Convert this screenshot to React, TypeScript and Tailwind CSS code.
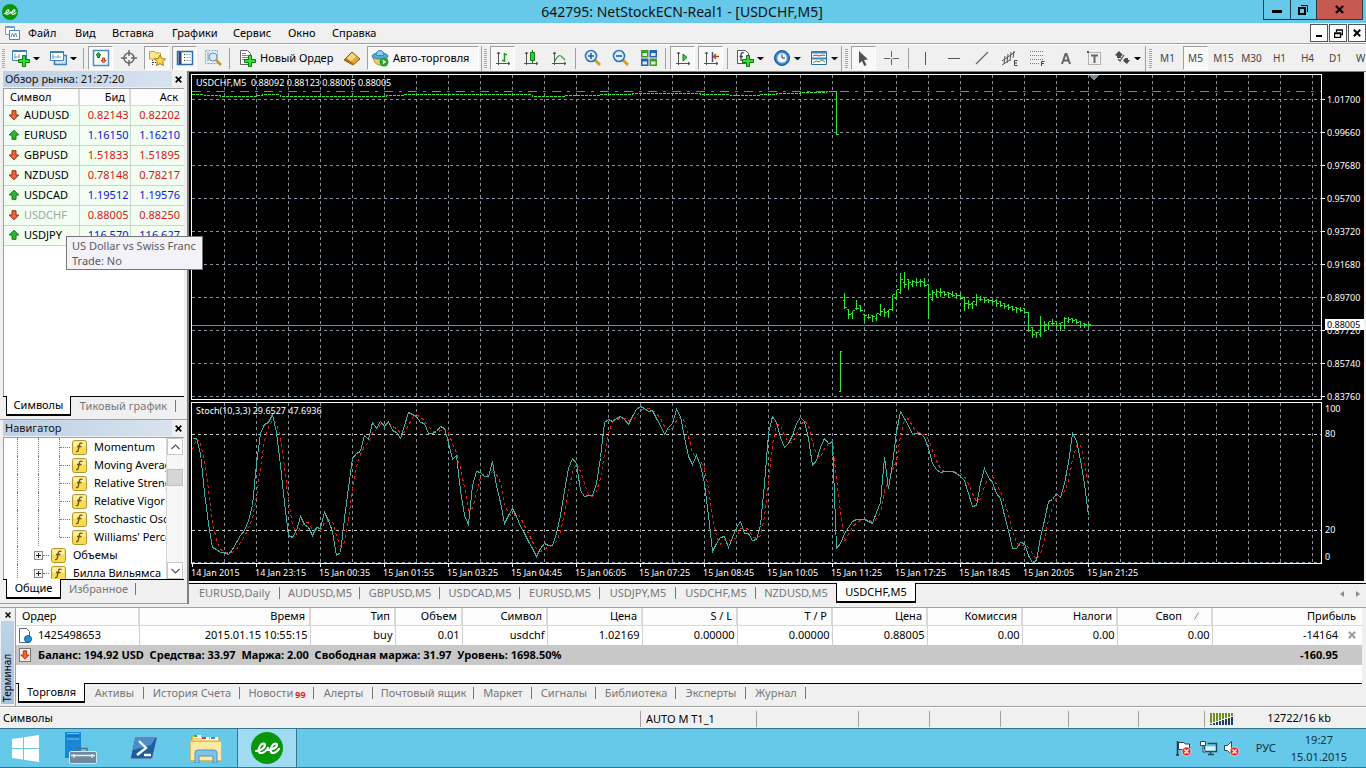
import type { ReactNode } from 'react'
import clsx from 'clsx'

type Quote = { symbol: string; bid: string; ask: string; up: boolean; muted?: boolean }

const quotes: Quote[] = [
  { symbol: 'AUDUSD', bid: '0.82143', ask: '0.82202', up: false },
  { symbol: 'EURUSD', bid: '1.16150', ask: '1.16210', up: true },
  { symbol: 'GBPUSD', bid: '1.51833', ask: '1.51895', up: false },
  { symbol: 'NZDUSD', bid: '0.78148', ask: '0.78217', up: false },
  { symbol: 'USDCAD', bid: '1.19512', ask: '1.19576', up: true },
  { symbol: 'USDCHF', bid: '0.88005', ask: '0.88250', up: false, muted: true },
  { symbol: 'USDJPY', bid: '116.570', ask: '116.627', up: true },
]

const indicators = ['Momentum', 'Moving Average of Oscillator', 'Relative Strength Index', 'Relative Vigor Index', 'Stochastic Oscillator', "Williams' Percent Range"]
const groups = ['Объемы', 'Билла Вильямса']

const priceLabels = ['1.01700', '0.99660', '0.97680', '0.95700', '0.93720', '0.91680', '0.89700', '0.87720', '0.85740', '0.83760']
const timeLabels = ['14 Jan 2015', '14 Jan 23:15', '15 Jan 00:35', '15 Jan 01:55', '15 Jan 03:25', '15 Jan 04:45', '15 Jan 06:05', '15 Jan 07:25', '15 Jan 08:45', '15 Jan 10:05', '15 Jan 11:25', '15 Jan 17:25', '15 Jan 18:45', '15 Jan 20:05', '15 Jan 21:25']

// %K line, one value per bar, in thirds of a pixel below the top of the indicator window
const stochMain = [
  115, 115, 160, 275, 370, 440, 448, 457, 456, 463, 447, 427, 405, 390, 360, 315, 190, 100, 73, 67, 42, 95, 195, 305, 405, 410, 390, 347,
  373, 380, 404, 380, 385, 335, 360, 392, 466, 455, 355, 260, 173, 160, 153, 105, 118, 66, 85, 62, 78, 62, 90, 97, 114, 75, 37, 42, 48, 65,
  68, 100, 100, 92, 77, 85, 125, 178, 165, 270, 345, 373, 255, 212, 216, 229, 229, 182, 255, 305, 370, 345, 325, 348, 378, 400, 422, 445,
  468, 445, 430, 436, 436, 400, 345, 270, 205, 175, 190, 270, 288, 286, 286, 250, 170, 65, 58, 62, 55, 49, 58, 72, 48, 28, 18, 25, 32, 30,
  55, 75, 102, 82, 68, 28, 48, 110, 168, 192, 165, 195, 250, 345, 453, 430, 410, 408, 440, 412, 380, 362, 400, 400, 420, 418, 375, 250,
  100, 47, 65, 110, 142, 130, 105, 68, 50, 62, 115, 195, 180, 140, 113, 130, 125, 443, 430, 398, 380, 362, 358, 357, 357, 363, 370, 335,
  305, 170, 265, 190, 95, 32, 55, 75, 103, 100, 98, 112, 145, 190, 208, 216, 212, 214, 212, 220, 228, 240, 280, 318, 315, 250, 205, 232,
  245, 280, 295, 345, 390, 445, 444, 426, 430, 466, 485, 480, 410, 360, 303, 298, 280, 290, 250, 185, 100, 120, 180, 250, 345,
]

// high / low of each bar after the gap, same units, below the top of the chart
const bars: [number, number][] = [
  [666, 712], [718, 742], [720, 742], [687, 715], [705, 720], [733, 750], [730, 742], [735, 750], [730, 746], [700, 733], [712, 735],
  [716, 738], [673, 716], [658, 684], [605, 665], [603, 648], [627, 655], [627, 645], [622, 642], [625, 645], [622, 645], [642, 740],
  [657, 686], [655, 676], [652, 676], [660, 672], [664, 678], [660, 675], [668, 682], [665, 683], [680, 716], [687, 711], [693, 711],
  [669, 702], [676, 686], [680, 692], [684, 694], [683, 697], [684, 704], [693, 706], [695, 712], [700, 714], [704, 718], [708, 724],
  [708, 720], [713, 727], [727, 780], [770, 797], [786, 797], [736, 795], [750, 781], [752, 774], [743, 760], [750, 768], [755, 776],
  [738, 770], [738, 752], [744, 752], [745, 756], [752, 768], [760, 768], [758, 768],
]

const clamp = (v: number, lo: number, hi: number) => Math.max(lo, Math.min(hi, v))
const toLine = (values: number[]) => values.map((v, i) => `${192.5 + i * 4},${Math.round(400 + v / 3) + 0.5}`).join(' ')
const stochSignal = stochMain.map((_, i) => {
  const part = stochMain.slice(Math.max(0, i - 2), i + 1)
  return part.reduce((a, b) => a + b, 0) / part.length + (i === 0 ? 32 : 0)
})

const barPath = bars
  .map(([hi, lo], i) => {
    const x = 844.5 + i * 4
    const [nextHi, nextLo] = bars[i + 1] ?? [hi, lo]
    const [prevHi, prevLo] = bars[i - 1] ?? [hi, lo]
    const px = (v: number) => Math.round(70 + v / 3) + 0.5
    const close = px(clamp((nextHi + nextLo) / 2, hi, lo))
    const open = px(clamp((prevHi + prevLo) / 2, hi, lo))
    return `M${x} ${px(hi)}V${px(lo) + 1}M${x - 1.5} ${open}H${x}M${x} ${close}H${x + 2}`
  })
  .join('')

const gridX = Array.from({ length: 35 }, (_, i) => 224.5 + i * 32)
const gridY = Array.from({ length: 10 }, (_, i) => 99.5 + i * 33)

/* ---------- icons ---------- */

function EeLogo({ className }: { className: string }) {
  return (
    <svg viewBox="0 0 32 32" className={className} aria-hidden="true">
      <circle cx="16" cy="16" r="16" fill="#0a960a" />
      <path d="M5 19c4 0 9-3 9-6 0-2-3-2-5 1s-2 7 1 7c2 0 5-2 7-5M16 18c4 0 10-2 10-5 0-2-3-2-5 1s-2 7 1 7c2 0 4-1 6-4" fill="none" stroke="#fff" strokeWidth="2.2" strokeLinecap="round" />
    </svg>
  )
}

function Icon({ children }: { children: ReactNode }) {
  return (
    <svg viewBox="0 0 18 18" className="size-[18px] shrink-0" fill="none" aria-hidden="true">
      {children}
    </svg>
  )
}

const plus = <path d="M10.500 6.500h3v4h4v3h-4v4h-3v-4h-4v-3h4z" fill="#35dc35" stroke="#0b7d0b" />
const axes = <path d="M4.500 3v13M2 14.500h14M3 5l1.500-2L6 5M14 13l2 1.500-2 1.500" stroke="#555" />

const icons = {
  newChart: <Icon><path d="M.500 1.500h14v10h-14z" fill="#fff" stroke="#3f7fb5" /><path d="M.500 2h14" stroke="#3f7fb5" strokeWidth="2" /><path d="M3 4v6M2 8h6M7 5v4" stroke="#7aa7c9" />{plus}</Icon>,
  profiles: <Icon><path d="M5.500 6.500h12v9h-12z" fill="#cfe3f5" stroke="#3f7fb5" strokeWidth="1.500" /><path d="M1.500 2.500h13v9h-13z" fill="#fff" stroke="#3f7fb5" /><path d="M1.500 3h13" stroke="#3f7fb5" strokeWidth="2" /><path d="M4 5v5M3 8h9M9 6v3" stroke="#7aa7c9" /></Icon>,
  market: <Icon><path d="M1.500 1.500h15v15h-15z" fill="#fff" stroke="#4a8cc4" strokeWidth="1.500" /><path d="M6.500 3.500 9 6H7.500v2.500h-2V6H4z" fill="#2fc02f" stroke="#157a15" /><path d="M11.500 14 9 11.500h1.500V9h2v2.500H14z" fill="#ff7a4c" stroke="#c03a14" /></Icon>,
  dataWindow: <Icon><circle cx="9" cy="9" r="5" stroke="#666" strokeWidth="1.500" /><path d="M9 1v6M9 11v6M1 9h6M11 9h6" stroke="#666" strokeWidth="1.500" /></Icon>,
  navigator: <Icon><path d="M1.500 2.500h5l1 1.500h5v6h-11z" fill="#ffe98a" stroke="#c9a227" /><path d="M4.500 11v6M5 13.500h3" stroke="#333" strokeDasharray="1 1" /><path d="m12 6 1.700 3.500 3.800.500-2.800 2.700.700 3.800-3.400-1.800-3.400 1.800.700-3.800L6.500 10l3.800-.500z" fill="#ffd84a" stroke="#a87c12" /></Icon>,
  terminal: <Icon><path d="M1.500 2.500h15v13h-15z" fill="#fff" stroke="#2f6ea8" strokeWidth="1.500" /><path d="M4 3v12" stroke="#2d3f78" strokeWidth="3" /><path d="M8 5.500h1M8 8.500h1M8 11.500h1" stroke="#333" /><path d="M10 5.500h5M10 8.500h5M10 11.500h5" stroke="#a8c8e4" /></Icon>,
  tester: <Icon><path d="M1.500 1.500h12v13h-12z" fill="#e4eef7" stroke="#8aaac4" strokeDasharray="2 1" /><path d="M4 3v9M7 5v7" stroke="#7a9ab8" /><circle cx="9" cy="8" r="4" fill="#d5ecfb" fillOpacity=".85" stroke="#6c8fae" /><path d="m12 11 5 5" stroke="#c9982a" strokeWidth="2.500" /></Icon>,
  newOrder: <Icon><path d="M2.500 1.500h7l3 3v11h-10z" fill="#fff" stroke="#666" /><path d="M4 4.500h4M4 6.500h6M4 8.500h6M4 10.500h3" stroke="#888" />{plus}</Icon>,
  editor: <Icon><path d="m1 11 8-8 8 7-7 6z" fill="#e2a63a" stroke="#8e5f10" /><path d="m1 11 9 5v-2L3 9.500z" fill="#a76c12" /><path d="m4 9 5-5 4 3.500-5 5z" fill="#f8d77c" /></Icon>,
  auto: <Icon><path d="M2 8c1 5 3 8 7 8s6-3 7-8z" fill="#f0cf58" stroke="#b58f23" /><ellipse cx="9" cy="7" rx="8" ry="3" fill="#5aa9d6" stroke="#2f7eac" /><path d="M5 6c0-6 8-6 8 0-2 1-6 1-8 0z" fill="#8ccbed" stroke="#2f7eac" /><circle cx="13" cy="13" r="4.500" fill="#1fa52c" /><path d="m11.800 10.500 3.500 2.500-3.500 2.500z" fill="#fff" /></Icon>,
  bars: <Icon>{axes}<path d="M10.500 4v9M8 11.500h2.500M10.500 5.500H13" stroke="#18a018" strokeWidth="1.500" /></Icon>,
  candles: <Icon>{axes}<path d="M10.500 1v13" stroke="#157a15" /><path d="M8.500 3.500h4v8h-4z" fill="#2fd02f" stroke="#157a15" /></Icon>,
  line: <Icon>{axes}<path d="M5 12c2-5 5-7 7-4l3 3" stroke="#3aa53a" strokeWidth="1.300" /></Icon>,
  zoomIn: <Icon><path d="m11 11 5 5" stroke="#d1a02c" strokeWidth="3" /><circle cx="7" cy="7" r="5.500" fill="#d9effb" stroke="#2f74b5" strokeWidth="1.600" /><path d="M4 7h6M7 4v6" stroke="#2b5fa0" strokeWidth="1.600" /></Icon>,
  zoomOut: <Icon><path d="m11 11 5 5" stroke="#d1a02c" strokeWidth="3" /><circle cx="7" cy="7" r="5.500" fill="#d9effb" stroke="#2f74b5" strokeWidth="1.600" /><path d="M4 7h6" stroke="#2b5fa0" strokeWidth="1.600" /></Icon>,
  tiles: <Icon><path d="M1 1h7.500v7.500H1zM9.500 9.500H17V17H9.500z" fill="#3f9e2a" /><path d="M9.500 1H17v7.500H9.500zM1 9.500h7.500V17H1z" fill="#2a5fc0" /><path d="M2.500 4H7v3H2.500zM11 4h4.500v3H11zM2.500 12.500H7v3H2.500zM11 12.500h4.500v3H11z" fill="#dcebdc" /></Icon>,
  autoScroll: <Icon>{axes}<path d="m9 5 4 3.500L9 12z" fill="#3fce4f" stroke="#157a15" /></Icon>,
  shift: <Icon>{axes}<path d="M10.500 3v10" stroke="#33558a" strokeWidth="1.500" /><path d="M17 7.500h-5M14 5l-2.500 2.500L14 10" stroke="#b8400a" strokeWidth="1.300" /></Icon>,
  indicatorList: <Icon><path d="M1.500 1.500h8l3 3v10h-11z" fill="#fff" stroke="#555" /><path d="M8 4c-2-1-3 0-3 2v6M3.500 7.500H7" stroke="#444" strokeWidth="1.300" />{plus}</Icon>,
  periods: <Icon><circle cx="9" cy="9" r="7.500" fill="#2f7fd0" stroke="#1e5490" /><circle cx="9" cy="9" r="5" fill="#f2f8fd" stroke="#8fb8dd" /><path d="M9 5.500V9h3" stroke="#333" /></Icon>,
  templates: <Icon><path d="M1.500 2.500h15v13h-15z" fill="#fff" stroke="#2f6ea8" /><path d="M1.500 3.500h15M2 9.500h14" stroke="#3f86c0" strokeWidth="2" /><path d="m3 7 3-1 3 1 3-1 3 .500" stroke="#b03a2a" /><path d="m3 14 3-2 3 1 3-2 3 2" stroke="#2f9a2f" /></Icon>,
  cursor: <Icon><path d="m4 2 9 8.500-4 .500 2.500 5-2.200 1L7 12l-3 2.500z" fill="#505050" /></Icon>,
  cross: <Icon><path d="M8.500 2v6M8.500 10v6M1 9.500h6.500M9.500 9.500H16" stroke="#666" /></Icon>,
  vline: <Icon><path d="M8.500 3v13" stroke="#555" /></Icon>,
  hline: <Icon><path d="M3 9.500h12" stroke="#555" /></Icon>,
  trend: <Icon><path d="M3 15 15 3" stroke="#666" strokeWidth="1.300" /></Icon>,
  channel: <Icon><path d="m1 12 13-9M1 16l8-5M4 7l-1 8M7 5 6 14M10 3 9 12M13 2l-1 7" stroke="#555" /><path d="M16.500 11.500h-3v5h3M13.500 14h2.500" stroke="#444" /></Icon>,
  fibo: <Icon><path d="M1 2.500h14M1 6.500h14M1 10.500h14M1 14.500h9" stroke="#777" strokeDasharray="1 1" /><path d="M15.500 12.500h-3V17M12.500 14.500H15" stroke="#444" /></Icon>,
  text: <Icon><path d="m5 15 3.500-10h1L13 15M6.500 11.500h5" stroke="#666" strokeWidth="2" /></Icon>,
  label: <Icon><path d="M3.500 3.500h12v12h-12z" stroke="#777" strokeDasharray="1 1" /><path d="M6 6.500h7M9.500 6v8" stroke="#666" strokeWidth="2" /><path d="M2 2h2v2H2z" fill="#555" /></Icon>,
  arrows: <Icon><path d="m6 2 4 4-4 2-4-2zM4 7h4v2H4zM12 9h3v2h2l-3 4-4-3z" fill="#4c4c4c" /><path d="m5 10 2 2 4-6" stroke="#555" strokeWidth="1.300" /></Icon>,
}

function TradeArrow({ up }: { up: boolean }) {
  return (
    <svg viewBox="0 0 12 12" className="size-3 shrink-0" aria-hidden="true">
      <path
        d="M6 1.200 10.800 6H8v4.300H4V6H1.200z"
        transform={up ? undefined : 'rotate(180 6 6)'}
        fill={up ? '#2fb92f' : '#f0643c'}
        stroke={up ? '#12701a' : '#a02c0c'}
      />
    </svg>
  )
}

function FunctionIcon() {
  return (
    <svg viewBox="0 0 15 15" className="size-[15px] shrink-0" aria-hidden="true">
      <rect x=".5" y=".5" width="14" height="14" rx="2" fill="#f7dc55" stroke="#b8952a" />
      <path d="M1.500 1.500h12v5h-12z" fill="#fdf0a0" />
      <path d="M10.500 3.500c-2-1-3 0-3.300 2l-.9 4.500c-.3 1.600-1 2-2.300 1.500M5 6.500h4.500" fill="none" stroke="#6b5410" strokeWidth="1.300" />
    </svg>
  )
}

/* ---------- toolbar ---------- */

function ToolButton({ label, pressed, menu, children }: { label: string; pressed?: boolean; menu?: boolean; children: ReactNode }) {
  return (
    <button type="button" aria-label={label} className="flex h-6 shrink-0 items-center">
      <span
        className={clsx(
          'flex h-6 w-[25px] items-center justify-center',
          pressed && 'border border-t-[#a0a0a0] border-r-white border-b-white border-l-[#a0a0a0] bg-[#f8f8f8]',
        )}
      >
        {children}
      </span>
      {menu && <span className="mr-0.5 h-0 w-[7px] border-x-[3px] border-t-[3px] border-x-transparent border-t-black" />}
    </button>
  )
}

function Divider() {
  return <span className="mx-px h-[21px] w-px shrink-0 bg-[#a0a0a0]" />
}

function Segment({ children, className }: { children: ReactNode; className?: string }) {
  return (
    <div className={clsx('flex h-[25px] items-center gap-[3px]', className)}>
      <span className="h-[19px] w-[3px] shrink-0 bg-[repeating-linear-gradient(#a8a8a8_0_1px,#f0f0f0_1px_2px)]" />
      {children}
    </div>
  )
}

function Toolbar() {
  return (
    <div className="flex h-[27px] items-center overflow-hidden border-t border-white">
      <Segment className="shrink-0 pl-0.5">
        <ToolButton label="Новый график" menu>{icons.newChart}</ToolButton>
        <ToolButton label="Профили" menu>{icons.profiles}</ToolButton>
        <Divider />
        <ToolButton label="Обзор рынка" pressed>{icons.market}</ToolButton>
        <ToolButton label="Окно данных">{icons.dataWindow}</ToolButton>
        <ToolButton label="Навигатор" pressed>{icons.navigator}</ToolButton>
        <ToolButton label="Терминал" pressed>{icons.terminal}</ToolButton>
        <ToolButton label="Тестер стратегий">{icons.tester}</ToolButton>
        <Divider />
        <button type="button" className="flex h-6 w-[102px] items-center gap-1 pl-1 text-[11px] whitespace-nowrap">
          {icons.newOrder}
          Новый Ордер
        </button>
        <ToolButton label="MetaEditor">{icons.editor}</ToolButton>
        <button type="button" className="flex h-6 w-[112px] items-center gap-1 border border-t-[#a0a0a0] border-r-white border-b-white border-l-[#a0a0a0] bg-[#f8f8f8] pl-[3px] text-[11px] whitespace-nowrap">
          {icons.auto}
          Авто-торговля
        </button>
      </Segment>
      <Segment className="ml-0.5 shrink-0 border-l border-[#a0a0a0] pl-0.5">
        <ToolButton label="Бары" pressed>{icons.bars}</ToolButton>
        <ToolButton label="Свечи">{icons.candles}</ToolButton>
        <ToolButton label="Линия">{icons.line}</ToolButton>
        <Divider />
        <ToolButton label="Увеличить">{icons.zoomIn}</ToolButton>
        <ToolButton label="Уменьшить">{icons.zoomOut}</ToolButton>
        <ToolButton label="Окна мозаикой">{icons.tiles}</ToolButton>
        <Divider />
        <ToolButton label="Автопрокрутка" pressed>{icons.autoScroll}</ToolButton>
        <ToolButton label="Сдвиг графика" pressed>{icons.shift}</ToolButton>
        <Divider />
        <ToolButton label="Индикаторы" menu>{icons.indicatorList}</ToolButton>
        <ToolButton label="Периоды" menu>{icons.periods}</ToolButton>
        <ToolButton label="Шаблоны" menu>{icons.templates}</ToolButton>
      </Segment>
      <Segment className="ml-px shrink-0 border-l border-[#a0a0a0] pl-[3px]">
        <ToolButton label="Курсор" pressed>{icons.cursor}</ToolButton>
        <ToolButton label="Перекрестие">{icons.cross}</ToolButton>
        <Divider />
        <ToolButton label="Вертикальная линия">{icons.vline}</ToolButton>
        <ToolButton label="Горизонтальная линия">{icons.hline}</ToolButton>
        <ToolButton label="Трендовая линия">{icons.trend}</ToolButton>
        <ToolButton label="Равноудаленный канал">{icons.channel}</ToolButton>
        <ToolButton label="Линии Фибоначчи">{icons.fibo}</ToolButton>
        <ToolButton label="Текст">{icons.text}</ToolButton>
        <ToolButton label="Метка">{icons.label}</ToolButton>
        <ToolButton label="Стрелки" menu>{icons.arrows}</ToolButton>
      </Segment>
      <Segment className="ml-0.5 min-w-0 flex-1 border-l border-[#a0a0a0] pl-[3px]">
        {['M1', 'M5', 'M15', 'M30', 'H1', 'H4', 'D1', 'W1'].map((p) => (
          <ToolButton key={p} label={p} pressed={p === 'M5'}>
            <span className="text-[10px] text-[#444]">{p}</span>
          </ToolButton>
        ))}
      </Segment>
    </div>
  )
}

/* ---------- side panels ---------- */

function PanelTitle({ children }: { children: ReactNode }) {
  return (
    <div className="flex h-4 items-center">
      <h2 className="flex-1 bg-linear-to-r from-[#bcd0e6] to-[#d8e3ee] pl-0.5 text-[11px] leading-4 text-[#111]">{children}</h2>
      <button type="button" aria-label="Закрыть" className="flex h-4 w-3 items-center justify-center">
        <CloseMark className="size-[7px] text-black" />
      </button>
    </div>
  )
}

function CloseMark({ className }: { className: string }) {
  return (
    <svg viewBox="0 0 7 7" className={className} aria-hidden="true">
      <path d="m.7.700 5.600 5.600M6.300.700.700 6.300" stroke="currentColor" strokeWidth="1.700" />
    </svg>
  )
}

function Tab({ active, className, children }: { active?: boolean; className: string; children: ReactNode }) {
  return (
    <button
      type="button"
      role="tab"
      aria-selected={!!active}
      className={clsx(
        'flex shrink-0 items-center justify-center whitespace-nowrap text-[11px]',
        active ? '-mt-px h-5 border-x border-b-2 border-black bg-white text-black' : 'h-[18px] text-[#777]',
        className,
      )}
    >
      {children}
    </button>
  )
}

function TabDivider() {
  return <span className="-ml-px mt-[3px] h-3 w-px shrink-0 bg-[#777]" />
}

function MarketWatch() {
  return (
    <section className="relative flex flex-1 flex-col border-b border-[#a0a0a0] pr-[3px] pl-[3px]">
      <PanelTitle>Обзор рынка: 21:27:20</PanelTitle>
      <div className="mt-px flex flex-1 flex-col border-t border-l border-[#a0a0a0] bg-white">
        <table className="w-full table-fixed border-collapse text-[11px] leading-4">
          <thead>
            <tr className="h-4 bg-[#fcfcfc] leading-[15px]">
              <th className="w-[75px] border-r-2 border-b border-[#d8d8d8] py-0 pl-1.5 text-left font-normal">Символ</th>
              <th className="w-[51px] border-r-2 border-b border-[#d8d8d8] py-0 pr-1 text-right font-normal">Бид</th>
              <th className="border-b border-[#d8d8d8] py-0 pr-1.5 text-right font-normal">Аск</th>
            </tr>
          </thead>
          <tbody>
            {quotes.map((q) => (
              <tr key={q.symbol} className="h-5 bg-[#f1fef1]">
                <td className={clsx('border-r border-b border-[#cdd3cd] py-0 pl-1', q.muted && 'text-[#a0a5a0]')}>
                  <span className="flex items-center gap-1">
                    <TradeArrow up={q.up} />
                    {q.symbol}
                  </span>
                </td>
                <td className={clsx('border-r border-b border-[#cdd3cd] py-0 pr-px text-right', q.up ? 'text-[#1414d8]' : 'text-[#d81414]')}>{q.bid}</td>
                <td className={clsx('border-b border-[#cdd3cd] py-0 pr-1 text-right', q.up ? 'text-[#1414d8]' : 'text-[#d81414]')}>{q.ask}</td>
              </tr>
            ))}
          </tbody>
        </table>
      </div>
      <div role="tablist" className="flex h-[23px] border-t border-black pl-[3px]">
        <Tab active className="w-[65px]">Символы</Tab>
        <Tab className="w-[105px]">Тиковый график</Tab>
        <TabDivider />
      </div>
      <div role="tooltip" className="absolute top-[165px] left-[66px] z-10 border border-[#767676] bg-[#f2f2f8] py-px pr-1.5 pl-[5px] text-[11px] leading-[15px] whitespace-nowrap text-[#5c5c5c]">
        US Dollar vs Swiss Franc
        <br />
        Trade: No
      </div>
    </section>
  )
}

function Navigator() {
  return (
    <section className="flex flex-col px-[3px]">
      <PanelTitle>Навигатор</PanelTitle>
      <div className="mt-px flex h-[142px] border-t border-l border-[#a0a0a0] bg-white">
        <ul className="min-w-0 flex-1 overflow-hidden text-[11px]">
          {indicators.map((name) => (
            <li key={name} className="flex h-[18px] items-center whitespace-nowrap">
              <span className="h-full w-[13px] shrink-0" />
              <span className="h-full w-[21px] shrink-0 border-l border-dotted border-[#777]" />
              <span className="h-full w-[21px] shrink-0 border-l border-dotted border-[#777]" />
              <span className={clsx('w-px shrink-0 border-l border-dotted border-[#777]', name.startsWith('Will') ? 'h-[9px] self-start' : 'h-full')} />
              <span className="mr-0.5 w-2.5 shrink-0 border-t border-dotted border-[#777]" />
              <FunctionIcon />
              <span className="ml-[7px]">{name}</span>
            </li>
          ))}
          {groups.map((name) => (
            <li key={name} className="flex h-[18px] items-center whitespace-nowrap">
              <span className="h-full w-[13px] shrink-0" />
              <span className="h-full w-[17px] shrink-0 border-l border-dotted border-[#777]" />
              <button type="button" aria-label={`Развернуть: ${name}`} className="flex size-[9px] shrink-0 items-center justify-center border border-[#8a8a8a] bg-[#f4f4f4]">
                <svg viewBox="0 0 5 5" className="size-[5px]" aria-hidden="true"><path d="M0 2.500h5M2.500 0v5" stroke="#222" /></svg>
              </button>
              <span className="mr-0.5 w-1.5 shrink-0 border-t border-dotted border-[#777]" />
              <FunctionIcon />
              <span className="ml-[7px]">{name}</span>
            </li>
          ))}
        </ul>
        <div className="mr-px flex w-[17px] flex-col border-l border-[#d8d8d8] bg-[#f6f6f6]">
          <ScrollArrow up />
          <div className="mt-3.5 h-[17px] border border-[#c0c0c0] bg-[#d6d6d6]" />
          <div className="flex-1" />
          <ScrollArrow />
        </div>
      </div>
      <div role="tablist" className="flex h-[22px] border-t border-black pl-[3px]">
        <Tab active className="w-[55px]">Общие</Tab>
        <Tab className="w-[75px]">Избранное</Tab>
        <TabDivider />
      </div>
    </section>
  )
}

function ScrollArrow({ up }: { up?: boolean }) {
  return (
    <button type="button" aria-label={up ? 'Вверх' : 'Вниз'} className="flex h-[17px] items-center justify-center border border-[#c8c8c8] bg-white">
      <svg viewBox="0 0 9 6" className="h-1.5 w-[9px]" fill="none" aria-hidden="true">
        <path d={up ? 'm.5 5 4-4 4 4' : 'm.5 1 4 4 4-4'} stroke="#555" strokeWidth="1.200" />
      </svg>
    </button>
  )
}

/* ---------- chart ---------- */

function Plot() {
  return (
    <svg viewBox="191 74 1131 490" preserveAspectRatio="none" className="block min-w-0 flex-1" shapeRendering="crispEdges" fill="none" role="img" aria-label="USDCHF, M5">
      <g stroke="#84919f" strokeDasharray="3 3">
        {gridX.map((x) => (
          <path key={x} d={`M${x} 75V399M${x} 403V563`} />
        ))}
        {gridY.map((y) => (
          <path key={y} d={`M192 ${y}H1321`} />
        ))}
        <path d="M192 562.500H1321" />
      </g>
      <path d="M192 434.500H1321M192 530.500H1321" stroke="#c8c8c8" strokeDasharray="3 3" />
      <path d="M192 325.500H1321" stroke="#778899" />
      <path d="M192 91.500H1321" stroke="#3cb43c" strokeDasharray="9 6 3 6" />
      <path
        d="M192 94.500H204V95.500H220V96.500H256V95.500H262V94.500H280V96.500H386V95.500H404V94.500H450V94.500H500V94.500H532V96.500H564V95.500H600V94.500H632V93.500H700V94.500H730V95.500H760V94.500H776V93.500H800V92.500H826V91.500H836"
        stroke="#32e632"
        strokeDasharray="3 1"
      />
      <path d="M836.500 91V135M837 134.500H839M840.500 351V392M839 391.500H840M841 351.500H842" stroke="#32e632" />
      <path d={barPath} stroke="#32e632" />
      <polyline points={toLine(stochSignal)} stroke="#e02020" strokeDasharray="3 3" />
      <polyline points={toLine(stochMain)} stroke="#3fb0a8" />
      <path d="M1088 75h11l-5.500 5.500z" fill="#778899" />
      <path d="M191.500 74.500h1130v325h-1130zM191.500 402.500h1130v161h-1130z" stroke="#fff" />
    </svg>
  )
}

function Chart() {
  return (
    <div className="flex flex-1 flex-col bg-black pt-0.5 pl-0.5 text-[9px] leading-3 text-white">
      <div className="relative flex flex-1">
        <Plot />
        <div className="relative flex w-[42px] flex-col">
          <div className="flex h-[329px] flex-col pt-[9px]">
            {priceLabels.map((p) => (
              <span key={p} className="flex h-[33px] shrink-0 items-center gap-0.5">
                <span className="h-px w-[3px] bg-white" />
                {p}
              </span>
            ))}
          </div>
          <div className="flex flex-1 flex-col pl-[3px]">
            <span className="h-[25px]">100</span>
            <span className="h-24">80</span>
            <span className="h-[27px]">20</span>
            <span>0</span>
          </div>
          <span className="absolute top-[245px] right-0 left-[3px] h-[11px] bg-white pl-0.5 leading-[11px] text-black">0.88005</span>
        </div>
        <span className="absolute top-[3px] left-[5px] whitespace-pre">USDCHF,M5{'  '}0.88092 0.88123 0.88005 0.88005</span>
        <span className="absolute top-[331px] left-[5px]">Stoch(10,3,3) 29.6527 47.6936</span>
      </div>
      <div className="flex h-[17px] overflow-hidden">
        {timeLabels.map((t) => (
          <span key={t} className="flex w-16 shrink-0 flex-col whitespace-nowrap">
            <span className="ml-px h-[3px] w-px bg-white" />
            {t}
          </span>
        ))}
      </div>
    </div>
  )
}

const chartTabs = ['AUDUSD,M5', 'GBPUSD,M5', 'USDCAD,M5', 'EURUSD,M5', 'USDJPY,M5', 'USDCHF,M5', 'NZDUSD,M5']

function ChartTabs() {
  return (
    <div className="border-t border-white bg-[#f0f0f0] pt-px">
      <div role="tablist" className="flex h-[21px] border-t border-black">
        <Tab className="w-[91px]">EURUSD,Daily</Tab>
        <TabDivider />
        {chartTabs.map((t, i) => (
          <div key={t} className="flex">
            <Tab className={t === 'USDJPY,M5' ? 'w-[76px]' : 'w-20'}>{t}</Tab>
            {i < chartTabs.length - 1 && <TabDivider />}
          </div>
        ))}
        <Tab active className="w-20">USDCHF,M5</Tab>
        <div className="ml-auto flex items-center gap-3 pr-1.5">
          <button type="button" aria-label="Назад" className="border-y-[3px] border-r-[4px] border-y-transparent border-r-[#8a8a8a]" />
          <button type="button" aria-label="Вперед" className="border-y-[3px] border-l-[4px] border-y-transparent border-l-[#8a8a8a]" />
        </div>
      </div>
    </div>
  )
}

/* ---------- terminal ---------- */

const columns = [
  { title: 'Ордер', width: 'w-[123px]', value: '' },
  { title: 'Время', width: 'w-[171px]', value: '2015.01.15 10:55:15' },
  { title: 'Тип', width: 'w-[85px]', value: 'buy' },
  { title: 'Объем', width: 'w-[67px]', value: '0.01' },
  { title: 'Символ', width: 'w-[85px]', value: 'usdchf' },
  { title: 'Цена', width: 'w-[95px]', value: '1.02169' },
  { title: 'S / L', width: 'w-[95px]', value: '0.00000' },
  { title: 'T / P', width: 'w-[95px]', value: '0.00000' },
  { title: 'Цена', width: 'w-[95px]', value: '0.88005' },
  { title: 'Комиссия', width: 'w-[95px]', value: '0.00' },
  { title: 'Налоги', width: 'w-[95px]', value: '0.00' },
  { title: 'Своп', width: 'w-[95px]', value: '0.00' },
]

const terminalTabs = [
  ['Активы', 'w-[59px]'],
  ['История Счета', 'w-[96px]'],
  ['Новости', 'w-[74px]'],
  ['Алерты', 'w-[59px]'],
  ['Почтовый ящик', 'w-[101px]'],
  ['Маркет', 'w-[58px]'],
  ['Сигналы', 'w-[64px]'],
  ['Библиотека', 'w-[80px]'],
  ['Эксперты', 'w-[70px]'],
  ['Журнал', 'w-[60px]'],
]

function Terminal() {
  return (
    <section className="mt-[3px] flex border-y border-[#a0a0a0] pr-1">
      <div className="flex w-[15px] flex-col items-center pt-0.5">
        <button type="button" aria-label="Закрыть" className="flex h-2.5 items-center">
          <CloseMark className="size-1.5 text-black" />
        </button>
        <h2 className="mt-px mb-0.5 flex w-[13px] flex-1 rotate-180 items-center justify-start bg-linear-to-b from-[#a9c1dd] to-[#bfd3e8] pt-0.5 text-[10px] leading-[13px] [writing-mode:vertical-rl]">Терминал</h2>
      </div>
      <div className="min-w-0 flex-1 border-l border-[#a0a0a0]">
        <div className="h-[75px] bg-white">
          <table className="w-full table-fixed border-collapse text-[11px] leading-4">
            <thead>
              <tr className="h-[17px] bg-[#fcfcfc]">
                {columns.map((c, i) => (
                  <th key={i} className={clsx('border-r-2 border-b border-[#d8d8d8] py-0 pr-1 font-normal', c.width, i === 0 ? 'pl-1.5 text-left' : 'text-right')}>
                    {c.title === 'Своп' ? (
                      <span className="flex items-center justify-end gap-3 pr-2">
                        Своп
                        <svg viewBox="0 0 5 8" className="h-2 w-[5px]" aria-hidden="true"><path d="M.500 7.500 4.500.500" stroke="#888" /></svg>
                      </span>
                    ) : (
                      c.title
                    )}
                  </th>
                ))}
                <th className="border-b border-[#d8d8d8] py-0 pr-1.5 text-right font-normal">Прибыль</th>
              </tr>
            </thead>
            <tbody>
              <tr className="h-5">
                {columns.map((c, i) => (
                  <td key={i} className="border-r border-[#d0d0d0] py-0 pr-0.5 text-right">
                    {i === 0 ? (
                      <span className="flex items-center gap-1.5 pl-0.5">
                        <svg viewBox="0 0 14 15" className="h-[15px] w-3.5" aria-hidden="true">
                          <path d="M1.500.500h7l3 3v11h-10z" fill="#fff" stroke="#666" />
                          <circle cx="10" cy="11" r="3.500" fill="#2490dc" stroke="#125c98" />
                        </svg>
                        1425498653
                      </span>
                    ) : (
                      c.value
                    )}
                  </td>
                ))}
                <td className="py-0 pr-1.5">
                  <span className="flex items-center justify-end gap-2.5">
                    -14164
                    <button type="button" aria-label="Закрыть ордер">
                      <CloseMark className="size-2 text-[#999]" />
                    </button>
                  </span>
                </td>
              </tr>
              <tr className="h-5 bg-[#c8c8c8] font-bold">
                <td colSpan={12} className="py-0 pl-[3px]">
                  <span className="flex items-center gap-[7px] whitespace-pre">
                    <span className="flex h-3.5 w-3 items-center justify-center border border-[#777] bg-[#fbe9e2]">
                      <svg viewBox="0 0 12 12" className="size-2.5" aria-hidden="true">
                        <path d="M6 11 1 6h3V1h4v5h3z" fill="#f0643c" stroke="#a02c0c" />
                      </svg>
                    </span>
                    Баланс: 194.92 USD{'  '}Средства: 33.97{'  '}Маржа: 2.00{'  '}Свободная маржа: 31.97{'  '}Уровень: 1698.50%
                  </span>
                </td>
                <td className="py-0 pr-6 text-right">-160.95</td>
              </tr>
            </tbody>
          </table>
        </div>
        <div role="tablist" className="flex h-[23px] border-t border-black pl-0.5">
          <Tab active className="w-[67px]">Торговля</Tab>
          {terminalTabs.map(([title, width]) => (
            <div key={title} className="flex">
              <Tab className={width}>
                {title}
                {title === 'Новости' && <span className="mt-1 ml-0.5 text-[9px] leading-3 font-bold text-[#e0202c]">99</span>}
              </Tab>
              <TabDivider />
            </div>
          ))}
        </div>
      </div>
    </section>
  )
}

function StatusBar() {
  return (
    <footer className="flex h-[21px] items-center border-t border-white pt-px text-[11px]">
      <span className="flex-1 pl-[3px]">Символы</span>
      <span className="h-4 w-[116px] border-l border-[#a0a0a0] pl-[5px] leading-4">AUTO M T1_1</span>
      <span className="h-4 w-[102px] border-l border-[#a0a0a0]" />
      <span className="h-4 w-[71px] border-l border-[#a0a0a0]" />
      <span className="h-4 w-[71px] border-l border-[#a0a0a0]" />
      <span className="h-4 w-[68px] border-l border-[#a0a0a0]" />
      <span className="h-4 w-[70px] border-l border-[#a0a0a0]" />
      <span className="h-4 w-[66px] border-l border-[#a0a0a0]" />
      <span className="flex h-4 w-[162px] items-center border-l border-[#a0a0a0] pl-[5px]">
        <svg viewBox="0 0 24 12" className="h-3 w-6" shapeRendering="crispEdges" aria-hidden="true">
          {[0, 1, 2, 3, 4, 5, 6, 7].map((i) => (
            <g key={i}>
              <path d={`M${i * 3} 0h2v${10 - i}h-2z`} fill="#6f8f1a" />
              <path d={`M${i * 3} ${11 - i}h2V12h-2z`} fill="#1b3f66" />
            </g>
          ))}
        </svg>
        <span className="flex-1 pr-[35px] text-right">12722/16 kb</span>
      </span>
    </footer>
  )
}

function Taskbar() {
  return (
    <nav className="flex h-10 items-center border-y border-[#35758c] bg-[#66c9e9]">
      <button type="button" aria-label="Пуск" className="flex w-[50px] justify-center">
        <svg viewBox="0 0 27 27" className="size-[27px]" fill="#fff" aria-hidden="true">
          <path d="m0 4 11-1.500V13H0zM12 2.300 27 0v13H12zM0 14h11v10.500L0 23zM12 14h15v13l-15-2.300z" />
        </svg>
      </button>
      <button type="button" aria-label="Диспетчер серверов" className="flex w-[62px] justify-center">
        <svg viewBox="0 0 32 32" className="size-8" aria-hidden="true">
          <path d="M0 0h16v26H0z" fill="#1787d8" />
          <path d="M2 4h12" stroke="#0f5f9c" />
          <path d="M2 1.500h12M2 7h12" stroke="#7cc0ee" />
          <path d="M12 20V16.500h10V20" fill="none" stroke="#5c6c7c" strokeWidth="1.500" />
          <rect x="4.500" y="19.500" width="27" height="12" rx="1.500" fill="#71889e" stroke="#d4e6f0" />
          <path d="M6 23.500h24M9 22v4M27 22v4" stroke="#e8f2f8" strokeWidth="1.300" />
        </svg>
      </button>
      <button type="button" aria-label="PowerShell" className="flex w-[63px] justify-center">
        <svg viewBox="0 0 28 24" className="h-6 w-7" fill="none" aria-hidden="true">
          <path d="M6 1h20q1.500 0 1.200 1.500l-4.500 19q-.4 1.500-2 1.500h-19Q.200 23 .500 21.500l4-19Q4.800 1 6 1z" fill="#1d5f9e" stroke="#8ab8dc" />
          <path d="M6 1h20l-5 8L3 14 5 3z" fill="#4b8fc9" />
          <path d="m9 5 7 7-9 7M14 19h7" stroke="#fff" strokeWidth="2.400" />
        </svg>
      </button>
      <button type="button" aria-label="Проводник" className="flex w-[62px] justify-center">
        <svg viewBox="0 0 32 30" className="h-[30px] w-8" aria-hidden="true">
          <path d="M2 3h9l2 2h16v6H2z" fill="#f3d77c" stroke="#c9a445" />
          <path d="M4 2h7v3H4z" fill="#fff" /><path d="M4 2h3v2H4z" fill="#2fae3a" />
          <path d="M12 4h7v3h-7z" fill="#fff" /><path d="M12 4h4v2h-4z" fill="#d8402c" />
          <path d="M20 4h8v3h-8z" fill="#fff" /><path d="M21 4h4v2h-4z" fill="#3a8ad0" />
          <path d="M.500 8.500h31v19h-31z" fill="#fbe9a4" stroke="#d8b95c" />
          <path d="M5 30V20q0-3 3-3h16q3 0 3 3v10h-4v-7H9v7z" fill="#7fc4ea" stroke="#4a94c4" />
        </svg>
      </button>
      <button type="button" aria-label="MetaTrader" aria-pressed="true" className="flex h-full w-[60px] items-center justify-center border-x border-[#35758c] bg-[#9fdcf2]">
        <EeLogo className="size-8" />
      </button>
      <div className="ml-auto flex items-center text-[11px] text-[#10313f]">
        <svg viewBox="0 0 66 18" className="h-[18px] w-[66px]" fill="none" aria-hidden="true">
          <path d="M2.500 2v14M1 16h3" stroke="#335" strokeWidth="1.500" />
          <path d="M3.500 3.500h5l2 1.500h4v7h-5l-2-1.500h-4z" fill="#fff" stroke="#335" />
          <path d="M32.500 4.500h9v8h-12v-5M33 15.500h6M35.500 12.500v3" stroke="#244a5c" strokeWidth="1.500" />
          <path d="M30.500 7.500h10v4h-10z" fill="#dff2fa" />
          <path d="M25.500 2.500h5v4h-5zM28 7v6h2" fill="#fff" stroke="#244a5c" />
          <path d="M49.500 6.500h3l4-4v13l-4-4h-3z" fill="#fff" stroke="#244a5c" />
          {[11.5, 59.5].map((x) => (
            <g key={x}>
              <circle cx={x} cy="12.500" r="4.500" fill="#dc2f2f" stroke="#fff" strokeWidth=".6" />
              <path d={`m${x - 2} 10.500 4 4m0-4-4 4`} stroke="#fff" strokeWidth="1.400" />
            </g>
          ))}
        </svg>
        <span className="w-[50px] text-center">РУС</span>
        <time className="mr-[19px] text-center leading-[17px]">
          19:27
          <br />
          15.01.2015
        </time>
      </div>
    </nav>
  )
}

/* ---------- window chrome ---------- */

function TitleBar() {
  return (
    <header className="flex h-[23px] items-start justify-between bg-[#66c9e9] pr-[3px] pl-0.5">
      <span className="flex h-full w-[99px] items-center">
        <EeLogo className="size-4" />
      </span>
      <h1 className="self-center text-[14px] leading-5 text-[#111]">642795: NetStockECN-Real1 - [USDCHF,M5]</h1>
      <div className="flex h-5 border-x border-b border-[#1f3b46]">
        <button type="button" aria-label="Свернуть" className="flex w-[27px] items-center justify-center border-r border-[#1f3b46]">
          <span className="mt-1 h-[3px] w-2.5 bg-black" />
        </button>
        <button type="button" aria-label="Восстановить" className="flex w-[26px] items-center justify-center border-r border-[#1f3b46]">
          <svg viewBox="0 0 10 10" className="size-2.5" fill="none" aria-hidden="true">
            <path d="M1 3h6v6H1z" stroke="#000" strokeWidth="2" />
            <path d="M3 .500h6.500V7" stroke="#000" />
          </svg>
        </button>
        <button type="button" aria-label="Закрыть" className="flex w-[45px] items-center justify-center bg-[#c75a50]">
          <CloseMark className="size-[9px] text-black" />
        </button>
      </div>
    </header>
  )
}

const menu = [
  ['Файл', 'w-[47px]'],
  ['Вид', 'w-[37px]'],
  ['Вставка', 'w-[60px]'],
  ['Графики', 'w-[61px]'],
  ['Сервис', 'w-[55px]'],
  ['Окно', 'w-[44px]'],
  ['Справка', 'w-[60px]'],
]

function MenuBar() {
  return (
    <div className="flex h-[21px] items-center border-b border-[#a0a0a0] pl-[5px] text-[11px]">
      <svg viewBox="0 0 15 14" className="mr-2 h-3.5 w-[15px]" fill="none" aria-hidden="true">
        <path d="M.500.500h9v8h-9z" fill="#fff" stroke="#6a9ccc" />
        <path d="M.500 1.500h9M4.500 5.500h9" stroke="#6a9ccc" />
        <path d="M4.500 4.500h10v9h-10z" fill="#fff" stroke="#4a84c0" />
        <path d="m6 11 1.500-4L9 11l1.500-4 1.500 4" stroke="#5a90c8" />
      </svg>
      {menu.map(([title, width]) => (
        <button key={title} type="button" className={clsx('text-left', width)}>{title}</button>
      ))}
      <div className="ml-auto flex gap-px">
        <button type="button" aria-label="Свернуть окно" className="flex size-[18px] items-center justify-center border border-[#555] bg-white">
          <span className="mt-1.5 h-0.5 w-1.5 bg-black" />
        </button>
        <button type="button" aria-label="Восстановить окно" className="flex size-[18px] items-center justify-center border border-[#555] bg-white">
          <svg viewBox="0 0 9 9" className="size-[9px]" fill="none" aria-hidden="true">
            <path d="M2.500 3V1h6v4.500H6.500M.500 4h6v4.500h-6zM.500 4.500h6" stroke="#000" strokeWidth="1.300" />
          </svg>
        </button>
        <button type="button" aria-label="Закрыть окно" className="flex size-[18px] items-center justify-center border border-[#555] bg-white">
          <CloseMark className="size-2 text-black" />
        </button>
      </div>
    </div>
  )
}

export default function App() {
  return (
    <div className="flex min-h-screen flex-col overflow-x-hidden bg-[#f0f0f0] font-['Noto_Sans','Open_Sans',sans-serif] text-black">
      <TitleBar />
      <MenuBar />
      <Toolbar />
      <main className="flex flex-1">
        <div className="flex w-[187px] shrink-0 flex-col border-b border-[#a0a0a0] pb-0.5">
          <MarketWatch />
          <Navigator />
        </div>
        <div className="flex min-w-0 flex-1 flex-col border-t border-l-2 border-[#808080]">
          <div className="mr-0.5 flex flex-1 flex-col">
            <Chart />
          </div>
          <ChartTabs />
        </div>
      </main>
      <Terminal />
      <StatusBar />
      <Taskbar />
    </div>
  )
}
